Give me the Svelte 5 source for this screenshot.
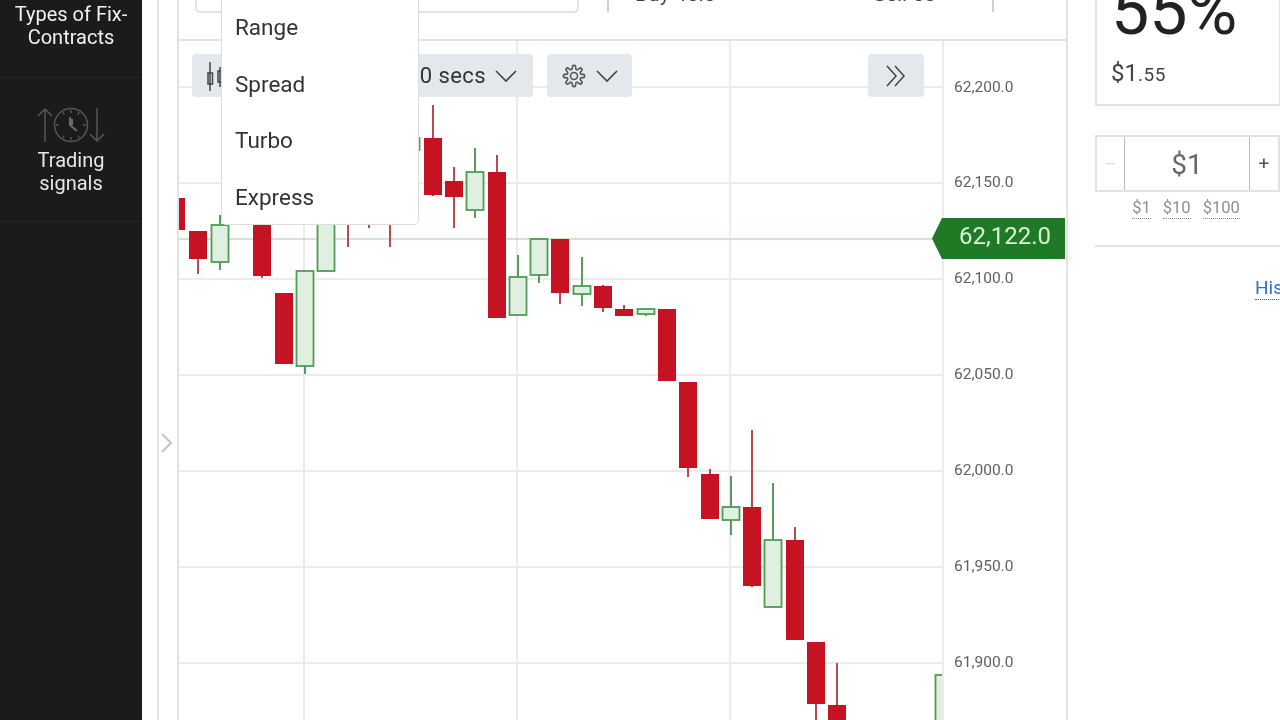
<script lang="ts">
  // [center x, body top, body bottom, wick top, wick bottom]
  const red = [
    [176, 198, 230, 198, 230],
    [198, 231, 259, 231, 274],
    [262, 190, 276, 190, 278],
    [284, 293, 364, 293, 364],
    [433, 138, 195, 105, 196],
    [454, 181, 197, 167, 228],
    [497, 172, 318, 155, 318],
    [560, 239, 293, 239, 304],
    [603, 286, 308, 285, 312],
    [624, 309, 316, 305, 316],
    [667, 309, 381, 309, 381],
    [688, 382, 468, 382, 477],
    [710, 474, 519, 469, 519],
    [752, 507, 586, 430, 587],
    [795, 540, 640, 527, 640],
    [816, 642, 704, 642, 720],
    [837, 705, 740, 663, 740],
  ];
  const green = [
    [220, 225, 262, 215, 270],
    [305, 271, 366, 271, 374],
    [326, 200, 271, 190, 271],
    [411, 138, 150, 138, 150],
    [475, 172, 210, 148, 218],
    [518, 277, 315, 255, 315],
    [539, 239, 275, 239, 283],
    [582, 286, 294, 257, 306],
    [646, 309, 314, 309, 316],
    [731, 507, 520, 476, 535],
    [773, 540, 607, 483, 607],
    [944, 675, 740, 675, 740],
  ];
  const redWicks = [
    [348, 215, 247],
    [390, 215, 247],
  ];
  const gridY = [87, 183, 279, 375, 471, 567, 663];
  const gridX = [304, 517, 730];
  const prices = [
    ["62,200.0", 92],
    ["62,150.0", 187],
    ["62,100.0", 283],
    ["62,050.0", 379],
    ["62,000.0", 475],
    ["61,950.0", 571],
    ["61,900.0", 667],
  ];
  const menuItems = ["Range", "Spread", "Turbo", "Express"];

  // 8 lobe cog outline around 0,0
  const cog = Array.from({ length: 48 }, (_, i) => {
    const a = (i / 48) * Math.PI * 2;
    const r = 8.8 + 1.9 * Math.max(-1, Math.min(1, Math.cos(a * 8) * 1.6));
    return `${(r * Math.cos(a)).toFixed(2)},${(r * Math.sin(a)).toFixed(2)}`;
  }).join(" ");
</script>

<div class="app">
  <aside class="sidebar">
    <div class="side-item first">Types of Fix-<br />Contracts</div>
    <div class="side-item signals">
      <svg class="signals-icon" width="70" height="36" viewBox="0 0 70 36" fill="none" stroke="#565656" stroke-width="1.5">
        <path d="M9 35V2M2 9l7-7 7 7" />
        <path d="M61 1v33M54 27l7 7 7-7" />
        <circle cx="35" cy="18" r="16.5" />
        <path d="M35 3v3M35 30v3M20 18h3M47 18h3M27 5l1 2.500M43 5l-1 2.500M27 31l1-2.500M43 31l-1-2.500" />
        <path d="M34 10v8l7 6M36 12v6" stroke="#6a6a6a" stroke-width="2" />
      </svg>
      <span>Trading<br />signals</span>
    </div>
  </aside>

  <div class="drawer">
    <svg width="12" height="20" viewBox="0 0 12 20" fill="none" stroke="#c4c4c4" stroke-width="2">
      <path d="M2 1l9 9-9 9" />
    </svg>
  </div>

  <main class="center">
    <div class="head">
      <div class="search"></div>
      <div class="stats">
        <span>Buy 45.0</span>
        <span>Sell 50</span>
      </div>
    </div>

    <div class="chart">
      <svg class="plot" viewBox="179 41 887 679" width="887" height="679">
        {#each gridY as y}
          <line x1="178" x2="943" y1={y} y2={y} class="grid" />
        {/each}
        {#each gridX as x}
          <line x1={x} x2={x} y1="41" y2="720" class="grid" />
        {/each}
        <line x1="178" x2="936" y1="239" y2="239" class="last-line" />

        <clipPath id="plot-area"><rect x="178" y="41" width="765" height="679" /></clipPath>
        <g clip-path="url(#plot-area)">
          {#each redWicks as [x, y1, y2]}
            <line x1={x} x2={x} {y1} {y2} class="wick-red" />
          {/each}
          <line x1="369" x2="369" y1="215" y2="228" class="wick-red" />
          {#each red as [x, top, bottom, y1, y2]}
            <line x1={x} x2={x} {y1} {y2} class="wick-red" />
            <rect x={x - 9} y={top} width="18" height={bottom - top} class="body-red" />
          {/each}
          {#each green as [x, top, bottom, y1, y2]}
            <line x1={x} x2={x} {y1} {y2} class="wick-green" />
            <rect x={x - 8.500} y={top} width="17" height={bottom - top} class="body-green" />
          {/each}
        </g>

        <line x1="943" x2="943" y1="41" y2="720" class="grid" />
        {#each prices as [label, y]}
          <text x="954" {y} class="price">{label}</text>
        {/each}
      </svg>

      <div class="tag">62,122.0</div>

      <div class="toolbar">
        <button class="tool types" type="button">
          <svg width="24" height="30" viewBox="0 0 24 30" fill="none" stroke="#444" stroke-width="1.500">
            <path d="M4 1v29M2 12h4.500v11H2zM14 6v20M12 10h5v11h-5z" />
          </svg>
        </button>
        <button class="tool time" type="button">
          <span>30 secs</span>
          <svg width="24" height="14" viewBox="0 0 24 14" fill="none" stroke="#444" stroke-width="1.600">
            <path d="M2 2l10 10L22 2" />
          </svg>
        </button>
        <button class="tool settings" type="button">
          <svg width="26" height="26" viewBox="-13 -13 26 26" fill="none" stroke="#555" stroke-width="1.600">
            <polygon points={cog} stroke-linejoin="round" />
            <circle r="3.500" />
          </svg>
          <svg width="24" height="14" viewBox="0 0 24 14" fill="none" stroke="#444" stroke-width="1.600">
            <path d="M2 2l10 10L22 2" />
          </svg>
        </button>
        <button class="tool expand" type="button">
          <svg width="22" height="22" viewBox="0 0 22 22" fill="none" stroke="#444" stroke-width="1.500">
            <path d="M2 1l9 10-9 10M10 1l9 10-9 10" />
          </svg>
        </button>
      </div>
    </div>

    <ul class="menu">
      {#each menuItems as item}
        <li>{item}</li>
      {/each}
    </ul>
  </main>

  <section class="panel">
    <div class="payout">
      <div class="percent">55%</div>
      <div class="profit">$1<small>.55</small></div>
    </div>
    <div class="stepper">
      <div class="step minus">–</div>
      <div class="amount">$1</div>
      <div class="step">+</div>
    </div>
    <div class="presets">
      <span>$1</span>
      <span>$10</span>
      <span>$100</span>
    </div>
    <hr />
    <div class="history"><span>History</span></div>
  </section>
</div>

<style>
  :global(body) {
    margin: 0;
    background: #fff;
  }

  .app {
    display: flex;
    width: 1280px;
    height: 720px;
    overflow: hidden;
    background: #fff;
    font-family: Roboto, sans-serif;
    filter: blur(0.6px);
  }

  .sidebar {
    flex: none;
    width: 142px;
    background: #1b1b1b;
    color: #f0f0f0;
    font-size: 20px;
    line-height: 23px;
    text-align: center;
  }

  .side-item {
    border-bottom: 1px solid #262626;
  }

  .first {
    height: 74px;
    padding-top: 3px;
  }

  .signals {
    height: 144px;
    display: flex;
    flex-direction: column;
    align-items: center;
    padding-top: 29px;
    box-sizing: border-box;
  }

  .signals span {
    margin-top: 6px;
    color: #e6e6e6;
  }

  .drawer {
    flex: none;
    box-sizing: border-box;
    width: 20px;
    height: 720px;
    margin-left: 15px;
    padding: 433px 0 0 1px;
    border-left: 2px solid #e2e2e2;
  }

  .drawer svg {
    display: block;
  }

  .center {
    flex: none;
    position: relative;
    display: flex;
    flex-direction: column;
    box-sizing: border-box;
    width: 891px;
    height: 720px;
    border-left: 2px solid #e2e2e2;
    border-right: 2px solid #e2e2e2;
  }

  .head {
    flex: none;
    display: flex;
    align-items: flex-start;
    box-sizing: border-box;
    height: 41px;
    padding-left: 16px;
    border-bottom: 2px solid #e2e2e2;
    overflow: hidden;
  }

  .search {
    box-sizing: border-box;
    width: 384px;
    height: 13px;
    border: 2px solid #e2e2e2;
    border-top: 0;
    border-radius: 0 0 5px 5px;
  }

  .stats {
    display: flex;
    justify-content: space-between;
    box-sizing: border-box;
    width: 387px;
    height: 12px;
    margin-left: 28px;
    padding: 0 56px 0 26px;
    border-left: 2px solid #d0d0d0;
    border-right: 2px solid #d0d0d0;
    color: #444;
    font-size: 21px;
    line-height: 0;
  }

  .stats span {
    margin-top: -6px;
  }

  .chart {
    flex: 1;
    position: relative;
  }

  .plot {
    display: block;
  }

  .grid {
    stroke: #ebebeb;
    stroke-width: 2;
  }

  .last-line {
    stroke: #c3dcbf;
    stroke-width: 1.500;
  }

  .wick-red {
    stroke: #b84a52;
    stroke-width: 2;
  }

  .wick-green {
    stroke: #5a9a5e;
    stroke-width: 2;
  }

  .body-red {
    fill: #c51324;
  }

  .body-green {
    fill: #e0f0e0;
    stroke: #529a56;
    stroke-width: 1.800;
  }

  .price {
    fill: #5f5f5f;
    font-size: 15.500px;
    font-family: Roboto, sans-serif;
  }

  .tag {
    position: absolute;
    top: 177px;
    left: 753px;
    width: 133px;
    height: 41px;
    box-sizing: border-box;
    padding-left: 27px;
    background: #1e7a24;
    clip-path: polygon(10px 0, 100% 0, 100% 100%, 10px 100%, 0 50%);
    color: #d8f2d8;
    font-size: 24px;
    line-height: 37px;
  }

  .toolbar {
    position: absolute;
    top: 13px;
    left: 13px;
    right: 142px;
    display: flex;
    gap: 14px;
  }

  .tool {
    display: flex;
    align-items: center;
    height: 43px;
    padding: 0;
    border: 0;
    border-radius: 4px;
    background: #e3e8ec;
    color: #333;
    font: 22px Roboto, sans-serif;
  }

  .types {
    width: 90px;
    padding-left: 14px;
  }

  .time {
    width: 237px;
    justify-content: flex-end;
    gap: 8px;
    padding-right: 15px;
    letter-spacing: 0.4px;
  }

  .settings {
    width: 85px;
    justify-content: center;
    gap: 8px;
  }

  .expand {
    width: 56px;
    justify-content: center;
    margin-left: auto;
  }

  .menu {
    position: absolute;
    top: 0;
    left: 42px;
    width: 198px;
    height: 225px;
    box-sizing: border-box;
    margin: 0;
    padding: 0 0 0 13px;
    list-style: none;
    background: #fff;
    border: 1px solid #ddd;
    border-top: 0;
    border-radius: 0 0 5px 5px;
    color: #333;
    font-size: 22.500px;
  }

  .menu li {
    height: 56.500px;
    line-height: 55px;
  }

  .panel {
    flex: none;
    width: 185px;
    margin-left: 27px;
  }

  .payout {
    box-sizing: border-box;
    height: 136px;
    margin-top: -30px;
    padding-left: 14px;
    border: 2px solid #e2e2e2;
    border-right-width: 1px;
  }

  .percent {
    color: #222;
    font-size: 68px;
    line-height: 79px;
  }

  .profit {
    margin-top: 7px;
    color: #444;
    font-size: 24px;
    line-height: 30px;
  }

  .profit small {
    font-size: 19px;
    letter-spacing: 0.5px;
  }

  .stepper {
    display: flex;
    height: 57px;
    margin-top: 29px;
    border: 2px solid #e2e2e2;
    box-sizing: border-box;
  }

  .step {
    flex: none;
    width: 28px;
    text-align: center;
    color: #555;
    font-size: 19px;
    line-height: 53px;
  }

  .minus {
    width: 27px;
    color: #dcdcdc;
  }

  .amount {
    flex: 1;
    border: solid #bdbdbd;
    border-width: 0 1px;
    text-align: center;
    color: #666;
    font-size: 28px;
    line-height: 56px;
  }

  .presets {
    display: flex;
    justify-content: center;
    gap: 12px;
    margin-top: 6px;
    padding-right: 3px;
    color: #8f8f8f;
    font-size: 16.500px;
    line-height: 20px;
  }

  .presets span {
    border-bottom: 1px dotted #888;
  }

  hr {
    height: 2px;
    margin: 26px 0 0;
    border: 0;
    background: #e2e2e2;
  }

  .history {
    margin-top: 31px;
    padding-left: 160px;
    white-space: nowrap;
    color: #2f6fd0;
    font-size: 19px;
    line-height: 20px;
  }

  .history span {
    border-bottom: 1px dotted #2f6fd0;
  }
</style>
